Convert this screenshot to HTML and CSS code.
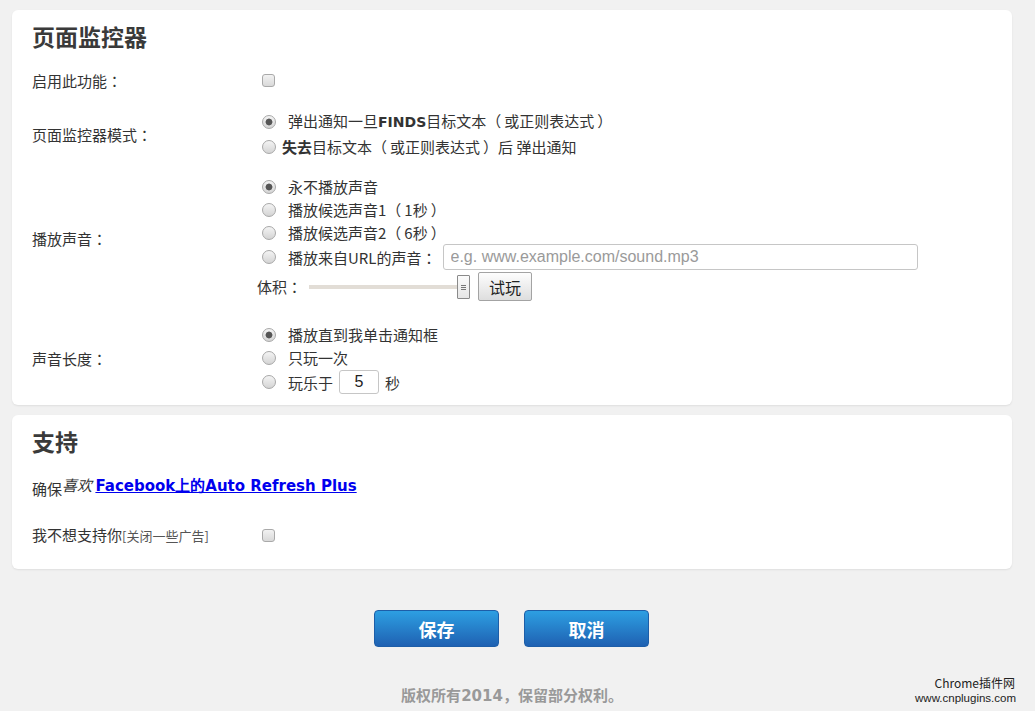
FILE: index.html
```html
<!DOCTYPE html>
<html lang="zh-CN">
<head>
<meta charset="utf-8">
<title>页面监控器</title>
<link rel="stylesheet" href="styles.css">
</head>
<body>
<div class="page">
  <section class="card card-monitor">
    <h1 class="card-title">页面监控器</h1>

    <div class="row row-enable">
      <div class="label">启用此功能<span class="p" lang="zh-TW">：</span></div>
      <div class="opts">
        <div class="line"><input type="checkbox" class="cb"></div>
      </div>
    </div>

    <div class="row row-mode">
      <div class="label">页面监控器模式<span class="p" lang="zh-TW">：</span></div>
      <div class="opts">
        <label class="line"><input type="radio" name="mode" class="rd" checked><span class="txt">弹出通知一旦<b class="latin-b">FINDS</b>目标文本<span class="po">（</span>或正则表达式<span class="pc">）</span></span></label>
        <label class="line"><input type="radio" name="mode" class="rd"><span class="txt txt-tight"><b>失去</b>目标文本<span class="po">（</span>或正则表达式<span class="pc">）</span>后 弹出通知</span></label>
      </div>
    </div>

    <div class="row row-sound">
      <div class="label">播放声音<span class="p" lang="zh-TW">：</span></div>
      <div class="opts">
        <label class="line"><input type="radio" name="sound" class="rd" checked><span class="txt">永不播放声音</span></label>
        <label class="line"><input type="radio" name="sound" class="rd"><span class="txt">播放候选声音1<span class="po">（</span>1秒<span class="pc">）</span></span></label>
        <label class="line"><input type="radio" name="sound" class="rd"><span class="txt">播放候选声音2<span class="po">（</span>6秒<span class="pc">）</span></span></label>
        <label class="line line-url"><input type="radio" name="sound" class="rd"><span class="txt">播放来自URL的声音<span class="p" lang="zh-TW">：</span></span><input type="text" class="url" placeholder="e.g. www.example.com/sound.mp3"></label>
        <div class="line line-volume">
          <span class="vol-label">体积<span class="p" lang="zh-TW">：</span></span>
          <input type="range" class="slider" min="0" max="100" value="100">
          <button class="btn-try" type="button">试玩</button>
        </div>
      </div>
    </div>

    <div class="row row-length">
      <div class="label">声音长度<span class="p" lang="zh-TW">：</span></div>
      <div class="opts">
        <label class="line"><input type="radio" name="len" class="rd" checked><span class="txt">播放直到我单击通知框</span></label>
        <label class="line"><input type="radio" name="len" class="rd"><span class="txt">只玩一次</span></label>
        <label class="line line-secs"><input type="radio" name="len" class="rd"><span class="txt">玩乐于</span><input type="text" class="secs" value="5"><span class="unit">秒</span></label>
      </div>
    </div>
  </section>

  <section class="card card-support">
    <h1 class="card-title">支持</h1>
    <div class="support-line"><span class="low">确保</span><em class="like">喜欢</em> <a href="#" class="fb-link">Facebook上的Auto Refresh Plus</a></div>
    <div class="row row-ads">
      <div class="label">我不想支持你<span class="small">[关闭一些广告]</span></div>
      <div class="opts">
        <div class="line"><input type="checkbox" class="cb"></div>
      </div>
    </div>
  </section>

  <div class="actions">
    <button class="btn-blue" type="button">保存</button>
    <button class="btn-blue" type="button">取消</button>
  </div>

  <footer class="copyright">版权所有<span class="digits">2014</span>，保留部分权利。</footer>
</div>
<div class="watermark"><span class="wm-top">Chrome插件网</span><br>www.cnplugins.com</div>
</body>
</html>
```

FILE: styles.css
```css
html, body {
  margin: 0;
  padding: 0;
}
body {
  background: #f1f1f1;
  font-family: "Noto Sans CJK SC", "Liberation Sans", sans-serif;
  font-size: 15px;
  color: #333;
  width: 1035px;
  height: 711px;
  overflow: hidden;
  position: relative;
}
.page {
  width: 1000px;
  margin-left: 12px;
  padding-top: 10px;
}
.card {
  background: #fff;
  border-radius: 6px;
  box-shadow: 0 1px 2px rgba(0,0,0,0.08);
  padding: 11px 20px 11px 20px;
}
.card-support {
  margin-top: 10px;
  padding-bottom: 22px;
}
.card-title {
  margin: 0;
  font-size: 23px;
  line-height: 30px;
  font-weight: bold;
  color: #3a3a3a;
}
.p {
  font-family: "Noto Sans CJK TC", "Noto Sans CJK SC", sans-serif;
}
.po {
  margin-right: 3px;
}
.pc {
  margin-left: 3px;
}
.row {
  display: grid;
  grid-template-columns: 230px 1fr;
  align-items: center;
}
.label {
  font-size: 15px;
  line-height: 23px;
  color: #333;
  white-space: nowrap;
}
.opts {
  display: flex;
  flex-direction: column;
}
.line {
  display: flex;
  align-items: center;
  height: 23px;
  line-height: 23px;
}
.row-enable { margin-top: 18px; }
.row-mode { margin-top: 17px; }
.row-mode .line { height: 25px; }
.row-sound { margin-top: 16px; }
.line-url { height: 26px; }
.line-volume { height: 29px; margin-top: 2px; }
.row-length { margin-top: 22px; }
.line-secs { height: 24px; margin-top: 1px; }
.row-ads { margin-top: 27px; }

.cb {
  -webkit-appearance: none;
  appearance: none;
  width: 13px;
  height: 13px;
  margin: 0;
  border: 1px solid #a9a9a9;
  border-radius: 3px;
  background: linear-gradient(#f2f2f2, #d9d9d9);
  box-sizing: border-box;
}
.rd {
  -webkit-appearance: none;
  appearance: none;
  width: 14px;
  height: 14px;
  margin: 0;
  border: 1px solid #a8a8a8;
  border-radius: 50%;
  background: linear-gradient(#f4f4f4, #d4d4d4);
  box-sizing: border-box;
  flex: none;
}
.rd:checked {
  background: radial-gradient(circle, #555 0 2.8px, #777 3.2px, transparent 3.8px), linear-gradient(#f4f4f4, #d4d4d4);
}
.txt {
  margin-left: 12px;
  white-space: nowrap;
}
.txt-tight { margin-left: 6px; }
.latin-b {
  font-family: "DejaVu Sans", sans-serif;
  font-size: 14px;
  font-weight: bold;
}
.url {
  margin-left: 6px;
  width: 475px;
  height: 26px;
  box-sizing: border-box;
  border: 1px solid #c6c6c6;
  border-radius: 3px;
  padding: 0 7px;
  font-family: "Liberation Sans", Arial, sans-serif;
  font-size: 16px;
  color: #333;
  outline: none;
}
.url::placeholder { color: #9a9a9a; }
.vol-label {
  margin-left: -5px;
  white-space: nowrap;
}
.slider {
  -webkit-appearance: none;
  appearance: none;
  width: 161px;
  height: 24px;
  margin: 0 0 0 7px;
  background: transparent;
}
.slider::-webkit-slider-runnable-track {
  height: 4px;
  background: #e2ddd6;
}
.slider::-webkit-slider-thumb {
  -webkit-appearance: none;
  width: 13px;
  height: 24px;
  margin-top: -10px;
  box-sizing: border-box;
  border: 1px solid #8a8a8a;
  border-radius: 1px;
  background:
    linear-gradient(#777, #777) center 9px / 5px 1px no-repeat,
    linear-gradient(#777, #777) center 11px / 5px 1px no-repeat,
    linear-gradient(#777, #777) center 13px / 5px 1px no-repeat,
    linear-gradient(#fbfbfb, #e6e6e6);
}
.btn-try {
  margin-left: 8px;
  width: 54px;
  height: 29px;
  border: 1px solid #a3a3a3;
  border-radius: 2px;
  background: linear-gradient(#fdfdfd, #dedede);
  font-family: "Noto Sans CJK SC", sans-serif;
  font-size: 16px;
  color: #222;
  padding: 0;
}
.secs {
  margin-left: 6px;
  width: 40px;
  height: 24px;
  box-sizing: border-box;
  border: 1px solid #c6c6c6;
  border-radius: 3px;
  text-align: center;
  font-family: "Liberation Sans", Arial, sans-serif;
  font-size: 16px;
  color: #222;
  padding: 0;
}
.unit { margin-left: 6px; }

.support-line {
  margin-top: 17px;
  height: 23px;
  line-height: 23px;
  white-space: nowrap;
}
.low {
  vertical-align: -4px;
}
.like {
  font-style: italic;
  font-size: 15px;
}
.fb-link {
  font-family: "DejaVu Sans", sans-serif;
  font-weight: bold;
  font-size: 15px;
  color: #0000ee;
  text-decoration: underline;
}
.small {
  font-size: 13px;
  color: #555;
}

.actions {
  display: flex;
  justify-content: center;
  gap: 25px;
  margin-top: 41px;
  padding-right: 1px;
}
.btn-blue {
  width: 125px;
  height: 37px;
  border: 1px solid #1d5ea8;
  border-radius: 4px;
  background: linear-gradient(#2d9fe2, #1f61b2);
  color: #fff;
  font-family: "Noto Sans CJK SC", sans-serif;
  font-size: 18px;
  font-weight: bold;
  padding: 0;
}
.copyright {
  margin-top: 38px;
  text-align: center;
  font-size: 15px;
  line-height: 20px;
  font-weight: bold;
  color: #999;
}
.digits {
  font-family: "DejaVu Sans", sans-serif;
  font-size: 15px;
}
.watermark {
  position: absolute;
  right: 19px;
  bottom: 6px;
  text-align: right;
  font-family: "Liberation Sans", "Noto Sans CJK SC", sans-serif;
  font-size: 11.5px;
  line-height: 14px;
  color: #222;
}
.wm-top {
  font-family: "Noto Sans CJK SC", sans-serif;
  font-size: 12px;
  margin-right: 1px;
}
```
